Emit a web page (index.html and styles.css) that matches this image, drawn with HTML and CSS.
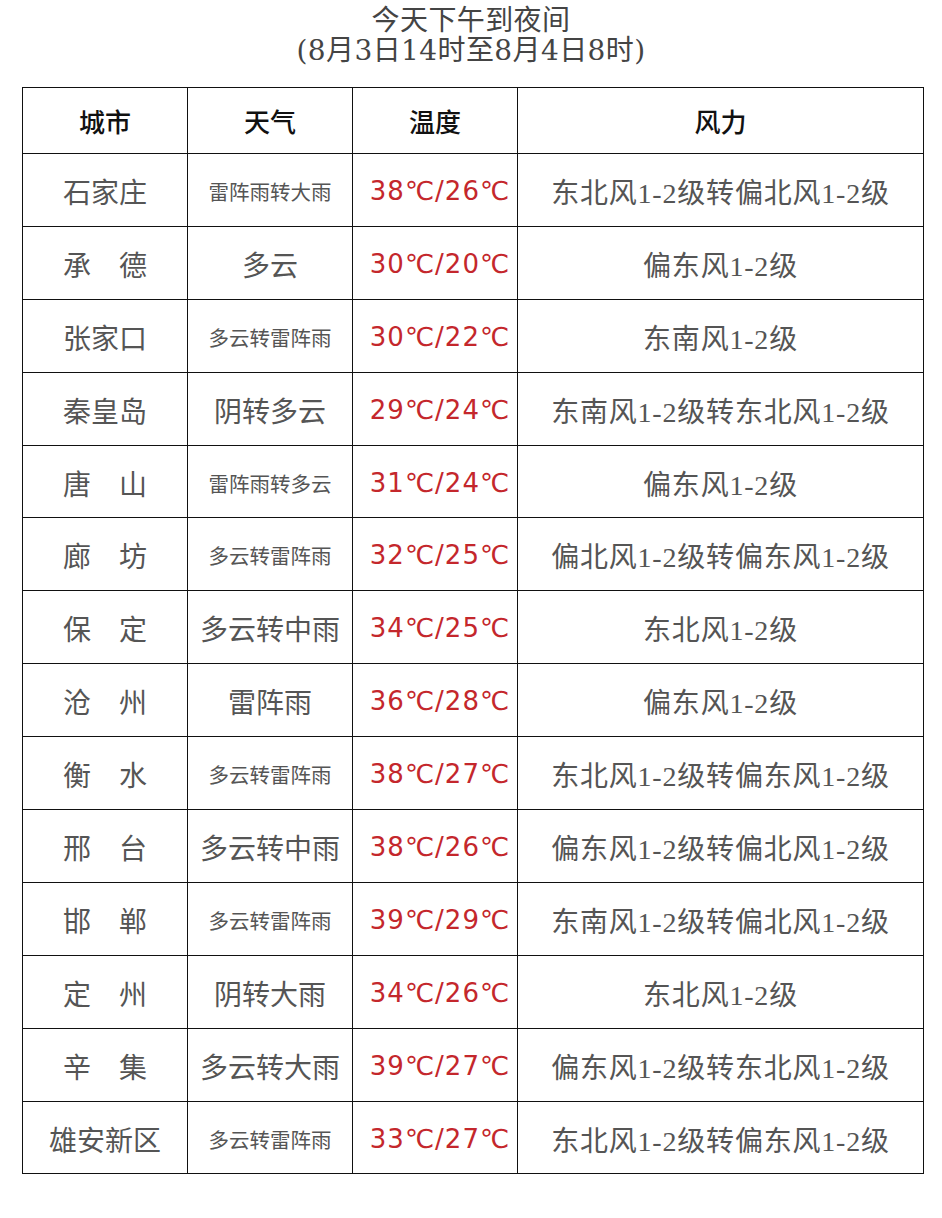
FILE: index.html
```html
<!DOCTYPE html>
<html lang="zh">
<head>
<meta charset="utf-8">
<link rel="stylesheet" href="styles.css">
</head>
<body>
<div class="title">
  <div>今天下午到夜间</div>
  <div>(8月3日14时至8月4日8时)</div>
</div>
<table class="wx">
  <colgroup><col class="c1"><col class="c2"><col class="c3"><col class="c4"></colgroup>
  <thead>
    <tr><th>城市</th><th>天气</th><th>温度</th><th>风力</th></tr>
  </thead>
  <tbody>
    <tr><td class="city">石家庄</td><td class="w sm">雷阵雨转大雨</td><td class="t">38℃/26℃</td><td class="f">东北风1-2级转偏北风1-2级</td></tr>
    <tr><td class="city">承　德</td><td class="w">多云</td><td class="t">30℃/20℃</td><td class="f">偏东风1-2级</td></tr>
    <tr><td class="city">张家口</td><td class="w sm">多云转雷阵雨</td><td class="t">30℃/22℃</td><td class="f">东南风1-2级</td></tr>
    <tr><td class="city">秦皇岛</td><td class="w">阴转多云</td><td class="t">29℃/24℃</td><td class="f">东南风1-2级转东北风1-2级</td></tr>
    <tr><td class="city">唐　山</td><td class="w sm">雷阵雨转多云</td><td class="t">31℃/24℃</td><td class="f">偏东风1-2级</td></tr>
    <tr><td class="city">廊　坊</td><td class="w sm">多云转雷阵雨</td><td class="t">32℃/25℃</td><td class="f">偏北风1-2级转偏东风1-2级</td></tr>
    <tr><td class="city">保　定</td><td class="w">多云转中雨</td><td class="t">34℃/25℃</td><td class="f">东北风1-2级</td></tr>
    <tr><td class="city">沧　州</td><td class="w">雷阵雨</td><td class="t">36℃/28℃</td><td class="f">偏东风1-2级</td></tr>
    <tr><td class="city">衡　水</td><td class="w sm">多云转雷阵雨</td><td class="t">38℃/27℃</td><td class="f">东北风1-2级转偏东风1-2级</td></tr>
    <tr><td class="city">邢　台</td><td class="w">多云转中雨</td><td class="t">38℃/26℃</td><td class="f">偏东风1-2级转偏北风1-2级</td></tr>
    <tr><td class="city">邯　郸</td><td class="w sm">多云转雷阵雨</td><td class="t">39℃/29℃</td><td class="f">东南风1-2级转偏北风1-2级</td></tr>
    <tr><td class="city">定　州</td><td class="w">阴转大雨</td><td class="t">34℃/26℃</td><td class="f">东北风1-2级</td></tr>
    <tr><td class="city">辛　集</td><td class="w">多云转大雨</td><td class="t">39℃/27℃</td><td class="f">偏东风1-2级转东北风1-2级</td></tr>
    <tr><td class="city">雄安新区</td><td class="w sm">多云转雷阵雨</td><td class="t">33℃/27℃</td><td class="f">东北风1-2级转偏东风1-2级</td></tr>
  </tbody>
</table>
</body>
</html>
```
FILE: styles.css
```css
html, body {
  margin: 0;
  padding: 0;
  background: #ffffff;
}
body {
  font-family: "Liberation Serif", "Noto Sans CJK SC", serif;
  color: #555;
}
.title {
  padding-top: 6px;
  text-align: center;
  font-family: "DejaVu Serif", "Noto Sans CJK SC", serif;
  font-size: 28px;
  line-height: 30px;
  color: #444;
  width: 942px;
  letter-spacing: 0.4px;
}
.wx {
  margin: 21px 0 0 22px;
  border-collapse: collapse;
  table-layout: fixed;
  width: 901px;
}
.c1, .c2, .c3 { width: 165px; }
.c4 { width: 406px; }
.wx th, .wx td {
  border: 1px solid #111;
  text-align: center;
  vertical-align: middle;
  padding: 0;
  white-space: nowrap;
}
.wx th {
  height: 65px;
  font-size: 26px;
  font-weight: 500;
  color: #111;
}
.wx td {
  height: 69.9px;
  font-size: 28px;
  color: #555;
  padding-top: 2px;
}
.wx td.sm {
  font-size: 20.5px;
}
.wx td.t {
  font-family: "DejaVu Sans", "Noto Sans CJK SC", sans-serif;
  font-size: 26px;
  color: #c4272c;
  letter-spacing: 1px;
  padding-left: 10px;
}
.wx td.f {
  font-family: "Liberation Serif", "Noto Sans CJK SC", serif;
  letter-spacing: 0.8px;
}
```
